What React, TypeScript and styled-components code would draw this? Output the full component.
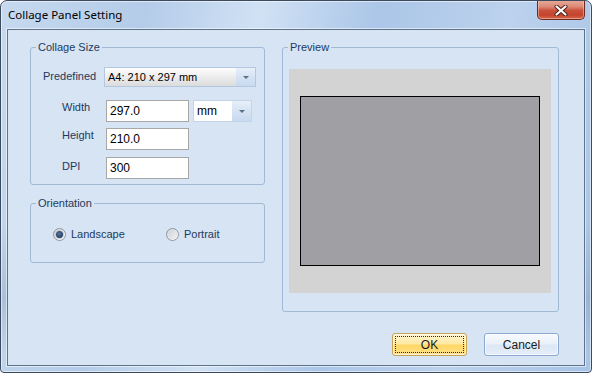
import React from "react";
import styled, { createGlobalStyle } from "styled-components";

const UI_FONT = `"Liberation Sans", Arial, sans-serif`;
const TITLE_FONT = `"Noto Sans", "Liberation Sans", sans-serif`;
const NAVY = "#1e395b";
const CLIENT_BG = "#d6e4f3";

const Global = createGlobalStyle`
  html, body { margin: 0; padding: 0; }
  body { width: 592px; height: 373px; overflow: hidden; background: #ffffff; }
  #root { width: 592px; height: 373px; }
  * { box-sizing: border-box; }
`;

const Window = styled.div`
  width: 592px;
  height: 373px;
  border: 1px solid #3b4a5c;
  border-radius: 7px 7px 4px 4px;
  background:
    linear-gradient(180deg, rgba(255,255,255,0) 60%, rgba(70,100,140,0.18) 80%, rgba(255,255,255,0) 95%),
    linear-gradient(100deg, #c6d9ef 0%, #b4cce9 22%, #d0e1f4 40%, #abc6e8 58%, #bcd2ed 78%, #a7c3e6 100%);
  box-shadow: inset 0 0 0 1px rgba(255, 255, 255, 0.55);
  display: flex;
  flex-direction: column;
  overflow: hidden;
`;

const TitleBar = styled.div`
  height: 28px;
  flex: none;
  display: flex;
  align-items: flex-start;
  justify-content: space-between;
  padding: 0 6px 0 7px;
`;

const Title = styled.div`
  margin-top: 6px;
  font-family: ${TITLE_FONT};
  font-size: 11.5px;
  line-height: 16px;
  color: #000;
`;

const CloseButton = styled.div`
  margin-top: -1px;
  width: 48px;
  height: 20px;
  border: 1px solid #6f2a20;
  border-top: none;
  border-radius: 0 0 5px 5px;
  background: linear-gradient(180deg, #e9ab9c 0%, #dc8a77 35%, #c9513b 55%, #c4452d 80%, #d7694e 100%);
  box-shadow: inset 0 0 0 1px rgba(255, 220, 210, 0.45);
  display: flex;
  align-items: center;
  justify-content: center;
  padding-top: 2px;
`;

const Client = styled.div`
  flex: 1;
  margin: 0 6px 6px 6px;
  border: 1px solid #5f7288;
  box-shadow: 0 0 0 1px rgba(255, 255, 255, 0.55);
  background: ${CLIENT_BG};
  display: flex;
  flex-direction: column;
  font-family: ${UI_FONT};
  font-size: 11px;
`;

const Body = styled.div`
  display: flex;
  gap: 17px;
  padding: 17px 25px 0 22px;
`;

const LeftColumn = styled.div`
  width: 235px;
  display: flex;
  flex-direction: column;
  gap: 18px;
`;

const Group = styled.div<{ $pad: string; $w?: number }>`
  position: relative;
  border: 1px solid #a2b9d6;
  border-radius: 3px;
  padding: ${(p) => p.$pad};
  ${(p) => (p.$w ? `width: ${p.$w}px;` : "")}
`;

const GroupLabel = styled.span`
  position: absolute;
  top: -7px;
  left: 5px;
  padding: 0 2px;
  background: ${CLIENT_BG};
  color: ${NAVY};
  font-size: 11px;
  line-height: 13px;
  white-space: nowrap;
`;

const Row = styled.div<{ $indent: number; $mt?: number }>`
  display: flex;
  align-items: flex-start;
  padding-left: ${(p) => p.$indent}px;
  margin-top: ${(p) => p.$mt ?? 0}px;
`;

const FieldLabel = styled.span<{ $w: number; $pt: number }>`
  width: ${(p) => p.$w}px;
  padding-top: ${(p) => p.$pt}px;
  color: ${NAVY};
  line-height: 13px;
  white-space: nowrap;
`;

const ComboBox = styled.div<{ $w: number }>`
  width: ${(p) => p.$w}px;
  height: 20px;
  border: 1px solid #b3c7e1;
  background: linear-gradient(180deg, #fdfdfd 0%, #eeeeee 45%, #dcdcdc 100%);
  display: flex;
  align-items: stretch;
  color: #000;
`;

const ComboText = styled.span`
  flex: 1;
  align-self: center;
  padding-left: 3px;
  line-height: 13px;
  white-space: nowrap;
`;

const DropButton = styled.span`
  width: 19px;
  background: linear-gradient(180deg, #e7eff9 0%, #d6e3f3 50%, #c8daf0 100%);
  display: flex;
  align-items: center;
  justify-content: center;
`;

const Arrow = styled.span`
  width: 0;
  height: 0;
  border-left: 3px solid transparent;
  border-right: 3px solid transparent;
  border-top: 3px solid #5b6f8c;
`;

const TextBox = styled.div<{ $w: number }>`
  width: ${(p) => p.$w}px;
  height: 22px;
  border: 1px solid #a7a7a7;
  background: #ffffff;
  padding: 0 3px;
  display: flex;
  align-items: center;
  color: #000;
  font-size: 12px;
`;

const UnitCombo = styled.div`
  margin-left: 4px;
  width: 59px;
  height: 22px;
  border: 1px solid #c4d4e8;
  background: #ffffff;
  display: flex;
  align-items: stretch;
  color: #000;
  font-size: 12px;
`;

const RadioRow = styled.div`
  display: grid;
  grid-template-columns: 113px auto;
  height: 16px;
  align-items: center;
  padding-left: 22px;
`;

const RadioItem = styled.div`
  display: flex;
  align-items: center;
  gap: 5px;
  color: ${NAVY};
  line-height: 13px;
`;

const RadioCircle = styled.span<{ $checked?: boolean }>`
  width: 13px;
  height: 13px;
  border-radius: 50%;
  border: 1px solid #8f959c;
  background: linear-gradient(135deg, #cdd0d5 0%, #f4f5f6 70%, #ffffff 100%);
  display: flex;
  align-items: center;
  justify-content: center;
  &::after {
    content: "";
    width: 7px;
    height: 7px;
    border-radius: 50%;
    background: ${(p) =>
      p.$checked
        ? "radial-gradient(circle at 45% 40%, #5a769e 0%, #233d62 70%)"
        : "linear-gradient(135deg, #d2d5da 0%, #eef0f2 100%)"};
    box-shadow: ${(p) => (p.$checked ? "0 0 0 1px #c3cad5" : "0 0 0 1px #dcdfe3")};
  }
`;

const PreviewCanvas = styled.div`
  height: 224px;
  background: #d3d3d3;
  display: flex;
  align-items: center;
  justify-content: center;
`;

const Page = styled.div`
  width: 240px;
  height: 170px;
  border: 1px solid #000;
  background: #a0a0a4;
`;

const Footer = styled.div`
  display: flex;
  justify-content: flex-end;
  gap: 17px;
  padding: 21px 25px 0 0;
`;

const Button = styled.div<{ $primary?: boolean }>`
  width: 75px;
  height: 23px;
  border-radius: 3px;
  border: 1px solid ${(p) => (p.$primary ? "#c5a35a" : "#8ea9cf")};
  background: ${(p) =>
    p.$primary
      ? "linear-gradient(180deg, #fff6d2 0%, #ffe9a4 45%, #ffd765 55%, #ffe28c 100%)"
      : "linear-gradient(180deg, #f8fbfe 0%, #e9f0f9 48%, #dbe7f5 52%, #e6eef8 100%)"};
  box-shadow: inset 0 0 0 1px rgba(255, 255, 255, 0.6);
  padding: 2px;
  display: flex;
  color: #1b1b1b;
  font-size: 12px;
`;

const ButtonFace = styled.span<{ $focused?: boolean }>`
  flex: 1;
  display: flex;
  align-items: center;
  justify-content: center;
  border: 1px dotted ${(p) => (p.$focused ? "#1a2a70" : "transparent")};
`;

export default function App() {
  return (
    <>
      <Global />
      <Window>
        <TitleBar>
          <Title>Collage Panel Setting</Title>
          <CloseButton>
            <svg width="14" height="11" viewBox="0 0 14 11">
              <path d="M2.5 1.5 L11.5 9.5 M11.5 1.5 L2.5 9.5" stroke="#4a1d16" strokeWidth="4" strokeLinecap="round" />
              <path d="M2.5 1.5 L11.5 9.5 M11.5 1.5 L2.5 9.5" stroke="#ffffff" strokeWidth="2.2" strokeLinecap="round" />
            </svg>
          </CloseButton>
        </TitleBar>
        <Client>
          <Body>
            <LeftColumn>
              <Group $pad="19px 0 5px 12px">
                <GroupLabel>Collage Size</GroupLabel>
                <Row $indent={0}>
                  <FieldLabel $w={61} $pt={3}>Predefined</FieldLabel>
                  <ComboBox $w={152}>
                    <ComboText>A4: 210 x 297 mm</ComboText>
                    <DropButton>
                      <Arrow />
                    </DropButton>
                  </ComboBox>
                </Row>
                <Row $indent={19} $mt={13}>
                  <FieldLabel $w={44} $pt={1}>Width</FieldLabel>
                  <TextBox $w={83}>297.0</TextBox>
                  <UnitCombo>
                    <ComboText>mm</ComboText>
                    <DropButton>
                      <Arrow />
                    </DropButton>
                  </UnitCombo>
                </Row>
                <Row $indent={19} $mt={6}>
                  <FieldLabel $w={44} $pt={1}>Height</FieldLabel>
                  <TextBox $w={83}>210.0</TextBox>
                </Row>
                <Row $indent={19} $mt={7}>
                  <FieldLabel $w={44} $pt={3}>DPI</FieldLabel>
                  <TextBox $w={83}>300</TextBox>
                </Row>
              </Group>
              <Group $pad="22px 0 20px 0">
                <GroupLabel>Orientation</GroupLabel>
                <RadioRow>
                  <RadioItem>
                    <RadioCircle $checked />
                    Landscape
                  </RadioItem>
                  <RadioItem>
                    <RadioCircle />
                    Portrait
                  </RadioItem>
                </RadioRow>
              </Group>
            </LeftColumn>
            <Group $pad="21px 7px 18px 6px" $w={277}>
              <GroupLabel>Preview</GroupLabel>
              <PreviewCanvas>
                <Page />
              </PreviewCanvas>
            </Group>
          </Body>
          <Footer>
            <Button $primary>
              <ButtonFace $focused>OK</ButtonFace>
            </Button>
            <Button>
              <ButtonFace>Cancel</ButtonFace>
            </Button>
          </Footer>
        </Client>
      </Window>
    </>
  );
}
